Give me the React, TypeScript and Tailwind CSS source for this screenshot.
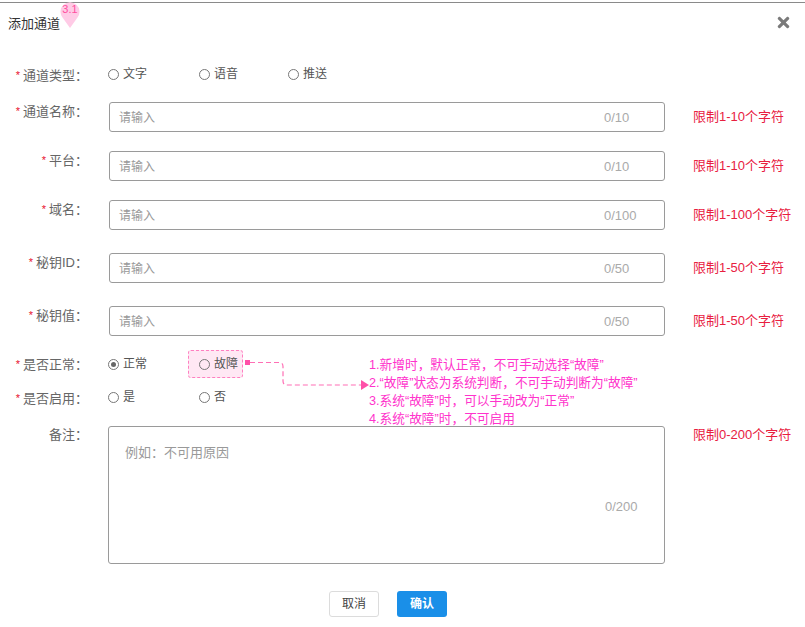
import React from 'react';
import { FaTimes } from 'react-icons/fa';

const font = { fontFamily: '"Liberation Sans", "Noto Sans CJK SC", sans-serif' };

const Radio: React.FC<{ label: string; checked?: boolean }> = ({ label, checked }) => (
  <span className="flex items-center text-[12px] leading-[16px] text-[#555]">
    <span className="w-[11px] h-[11px] rounded-full border border-[#777] flex items-center justify-center mr-[4px]">
      {checked && <span className="w-[5px] h-[5px] rounded-full bg-[#666]" />}
    </span>
    {label}
  </span>
);

const Label: React.FC<{ text: string; required?: boolean }> = ({ text, required }) => (
  <div className="w-[88px] shrink-0 text-right text-[13px] leading-[16px] text-[#666] pt-[1px]">
    {required && <span className="text-[#e8102e] text-[11px] mr-[3px] align-[1px]">*</span>}
    {text}
  </div>
);

const fields = [
  { name: '通道名称：', max: '0/10', hint: '限制1-10个字符', mt: 'mt-[20px]' },
  { name: '平台：', max: '0/10', hint: '限制1-10个字符', mt: 'mt-[19px]' },
  { name: '域名：', max: '0/100', hint: '限制1-100个字符', mt: 'mt-[19px]' },
  { name: '秘钥ID：', max: '0/50', hint: '限制1-50个字符', mt: 'mt-[23px]' },
  { name: '秘钥值：', max: '0/50', hint: '限制1-50个字符', mt: 'mt-[23px]' },
];

export default function App() {
  return (
    <div className="relative w-[805px] h-[627px] bg-white overflow-hidden" style={font}>
      <div className="mt-[2px] border-t border-[#8a8a8a]" />

      {/* header */}
      <div className="h-[42px] flex items-center justify-between pl-[8px] pr-[13px]">
        <span className="text-[13px] text-[#333]">添加通道</span>
        <FaTimes className="text-[#7a7a7a] text-[17px] mt-[-4px]" />
      </div>

      {/* version pin */}
      <svg className="absolute left-[58px] top-0" width="24" height="30" viewBox="0 0 24 30">
        <path d="M12 28 L4.5 17.5 A9.5 9.5 0 1 1 19.5 17.5 Z" fill="#ffcbe6" />
        <text x="12" y="13" textAnchor="middle" fontSize="11" fill="#ff4f9f" fontFamily="Liberation Sans, sans-serif">3.1</text>
      </svg>

      {/* 通道类型 */}
      <div className="flex mt-[21px] h-[16px]">
        <Label text="通道类型：" required />
        <div className="flex ml-[20px]">
          <div className="w-[91px]"><Radio label="文字" /></div>
          <div className="w-[89px]"><Radio label="语音" /></div>
          <div><Radio label="推送" /></div>
        </div>
      </div>

      {fields.map((f) => (
        <div key={f.name} className={`flex ${f.mt}`}>
          <Label text={f.name} required />
          <div className="ml-[21px] w-[556px] h-[30px] border border-[#9a9a9a] rounded-[3px] flex items-center pt-[2px]">
            <span className="flex-1 pl-[9px] text-[12px] text-[#999]">请输入</span>
            <span className="w-[60px] text-[13px] text-[#aaa]">{f.max}</span>
          </div>
          <div className="ml-[28px] flex items-center text-[13px] text-[#e8203f]">{f.hint}</div>
        </div>
      ))}

      {/* 是否正常 */}
      <div className="flex items-center mt-[14px] h-[28px]">
        <Label text="是否正常：" required />
        <div className="flex items-center ml-[20px]">
          <div className="w-[80px]"><Radio label="正常" checked /></div>
          <div className="w-[55px] h-[28px] flex items-center pl-[10px] bg-[#ffe8f4] border border-dashed border-[#ff7fc0] rounded-[3px]">
            <Radio label="故障" />
          </div>
        </div>
      </div>

      {/* 是否启用 */}
      <div className="flex mt-[11px] h-[16px]">
        <Label text="是否启用：" required />
        <div className="flex ml-[20px]">
          <div className="w-[91px]"><Radio label="是" /></div>
          <div><Radio label="否" /></div>
        </div>
      </div>

      {/* 备注 */}
      <div className="flex mt-[21px]">
        <Label text="备注：" />
        <div className="relative ml-[20px] w-[557px] h-[138px] border border-[#9a9a9a] rounded-[3px]">
          <div className="pl-[16px] pt-[16px] text-[13px] text-[#999]">例如：不可用原因</div>
          <span className="absolute left-[496px] top-[70px] text-[13px] text-[#aaa]">0/200</span>
        </div>
        <div className="ml-[28px] pt-[1px] text-[13px] leading-[16px] text-[#e8203f]">限制0-200个字符</div>
      </div>

      {/* buttons */}
      <div className="flex mt-[27px] ml-[329px] gap-[18px]">
        <button className="w-[50px] h-[26px] border border-[#dcdcdc] rounded-[3px] text-[12px] text-[#444] bg-white">取消</button>
        <button className="w-[50px] h-[26px] rounded-[3px] text-[12px] font-bold text-white bg-[#1a8fe8]">确认</button>
      </div>

      {/* annotation connector */}
      <svg className="absolute left-[243px] top-[358px]" width="128" height="34" viewBox="0 0 128 34">
        <rect x="2" y="2" width="5" height="5" fill="#ff4fa8" />
        <path d="M7 4.5 H36 Q40 4.5 40 8.5 V23 Q40 27 44 27 H118" fill="none" stroke="#ff6fb5" strokeWidth="1.2" strokeDasharray="5 3" />
        <path d="M118 22 L126 27 L118 32 Z" fill="#ff4fa8" />
      </svg>

      {/* annotation text */}
      <div className="absolute left-[369px] top-[356px] text-[12.7px] leading-[18px] text-[#ff33cc]">
        <div>1.新增时，默认正常，不可手动选择“故障”</div>
        <div>2.“故障”状态为系统判断，不可手动判断为“故障”</div>
        <div>3.系统“故障”时，可以手动改为“正常”</div>
        <div>4.系统“故障”时，不可启用</div>
      </div>
    </div>
  );
}
